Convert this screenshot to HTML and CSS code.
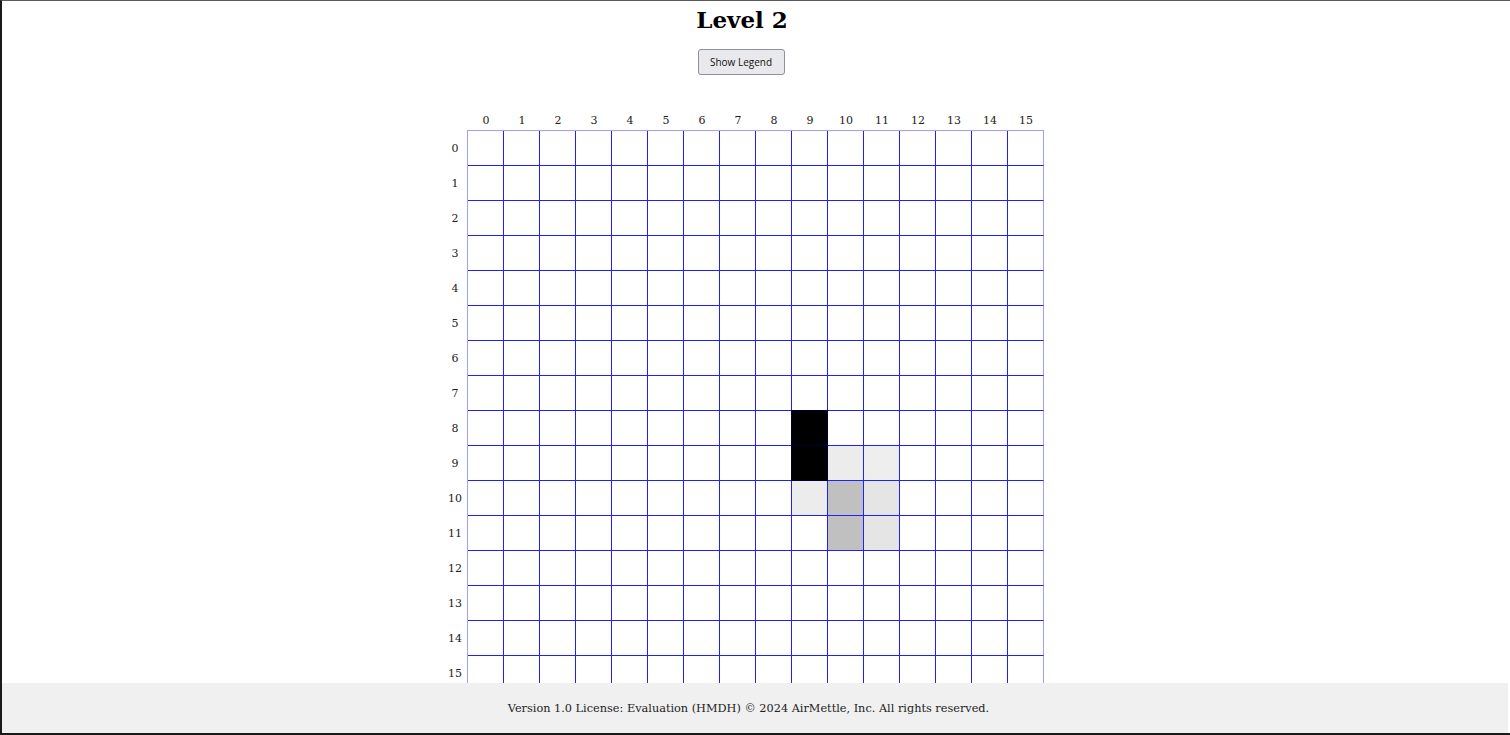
FILE: index.html
```html
<!DOCTYPE html>
<html lang="en">
<head>
<meta charset="utf-8">
<title>Level 2</title>
<link rel="stylesheet" href="styles.css">
</head>
<body>
<div class="page">
  <h1 class="title">Level 2</h1>
  <button class="legend-btn" type="button">Show Legend</button>
  <div class="board-wrap">
    <div class="col-labels">
      <span class="corner"></span>
      <span>0</span><span>1</span><span>2</span><span>3</span><span>4</span><span>5</span><span>6</span><span>7</span><span>8</span><span>9</span><span>10</span><span>11</span><span>12</span><span>13</span><span>14</span><span>15</span>
    </div>
    <div class="board-row">
      <div class="row-labels">
        <span>0</span><span>1</span><span>2</span><span>3</span><span>4</span><span>5</span><span>6</span><span>7</span><span>8</span><span>9</span><span>10</span><span>11</span><span>12</span><span>13</span><span>14</span><span>15</span>
      </div>
      <div class="board" id="board"></div>
    </div>
  </div>
</div>
<footer class="footer">Version 1.0 License: Evaluation (HMDH) © 2024 AirMettle, Inc. All rights reserved.</footer>
<div class="frame"></div>
<script src="app.js"></script>
</body>
</html>
```

FILE: app.js
```js
(function () {
  var board = document.getElementById('board');
  var special = {
    '8,9': 'black', '9,9': 'black',
    '9,10': 'light', '9,11': 'light2', '10,9': 'light',
    '10,10': 'mid', '11,10': 'mid',
    '10,11': 'pale', '11,11': 'pale'
  };
  for (var r = 0; r < 16; r++) {
    for (var c = 0; c < 16; c++) {
      var d = document.createElement('div');
      d.className = 'cell' + (c === 15 ? ' last-col' : '') + (special[r + ',' + c] ? ' ' + special[r + ',' + c] : '');
      board.appendChild(d);
    }
  }
})();
```

FILE: styles.css
```css
html, body {
  margin: 0;
  padding: 0;
  background: #fff;
}

body {
  font-family: "DejaVu Serif", serif;
  color: #000;
}

.page {
  width: 1484px;
  display: flex;
  flex-direction: column;
  align-items: center;
}

.title {
  margin: 6px 0 0;
  font-family: "DejaVu Serif", serif;
  font-weight: bold;
  font-size: 23px;
  line-height: 28px;
}

.legend-btn {
  margin-top: 15px;
  margin-right: 2px;
  width: 87px;
  height: 26px;
  padding: 0;
  font-family: "Open Sans", "DejaVu Sans", sans-serif;
  font-size: 10px;
  color: #111;
  background: #e9e9ed;
  border: 1px solid #8f8f9d;
  border-radius: 3px;
}

.board-wrap {
  margin-top: 35px;
  margin-left: 3px;
  display: flex;
  flex-direction: column;
}

.col-labels {
  display: flex;
  height: 20px;
  align-items: center;
  font-size: 11px;
  color: #222;
}

.col-labels span {
  width: 36px;
  text-align: center;
}

.col-labels .corner {
  width: 25px;
}

.board-row {
  display: flex;
}

.row-labels {
  width: 24px;
  display: flex;
  flex-direction: column;
  padding-top: 1px;
  font-size: 11px;
  color: #222;
}

.row-labels span {
  height: 35px;
  line-height: 35px;
  text-align: center;
}

.board {
  display: grid;
  grid-template-columns: repeat(16, 36px);
  grid-auto-rows: 35px;
  border-top: 1px solid #a0a0ff;
  border-left: 1px solid #a0a0ff;
}

.cell {
  box-sizing: border-box;
  border-right: 1px solid #2020ff;
  border-bottom: 1px solid #2020ff;
  background: #fff;
}

.cell.last-col {
  border-right-color: #a0a0ff;
}

.cell.black {
  background: #000;
  border-color: #00002e;
  box-shadow: -1px 0 0 #00002e, 0 -1px 0 #00002e, -1px -1px 0 #00002e;
}

.cell.light {
  background: #ececec;
}

.cell.light2 {
  background: #eeeeee;
}

.cell.mid {
  background: #c0c0c0;
}

.cell.pale {
  background: #e5e5e5;
}

.footer {
  position: fixed;
  left: 2px;
  right: 2px;
  bottom: 2px;
  height: 50px;
  line-height: 52px;
  padding-right: 13px;
  background: #f0f0f0;
  text-align: center;
  font-family: "DejaVu Serif", serif;
  font-size: 11.3px;
  color: #222;
}

.frame {
  position: fixed;
  inset: 0;
  pointer-events: none;
  border-top: 1px solid #5a5a5a;
  border-left: 2px solid #1a1a1a;
  border-bottom: 2px solid #1a1a1a;
}
```
